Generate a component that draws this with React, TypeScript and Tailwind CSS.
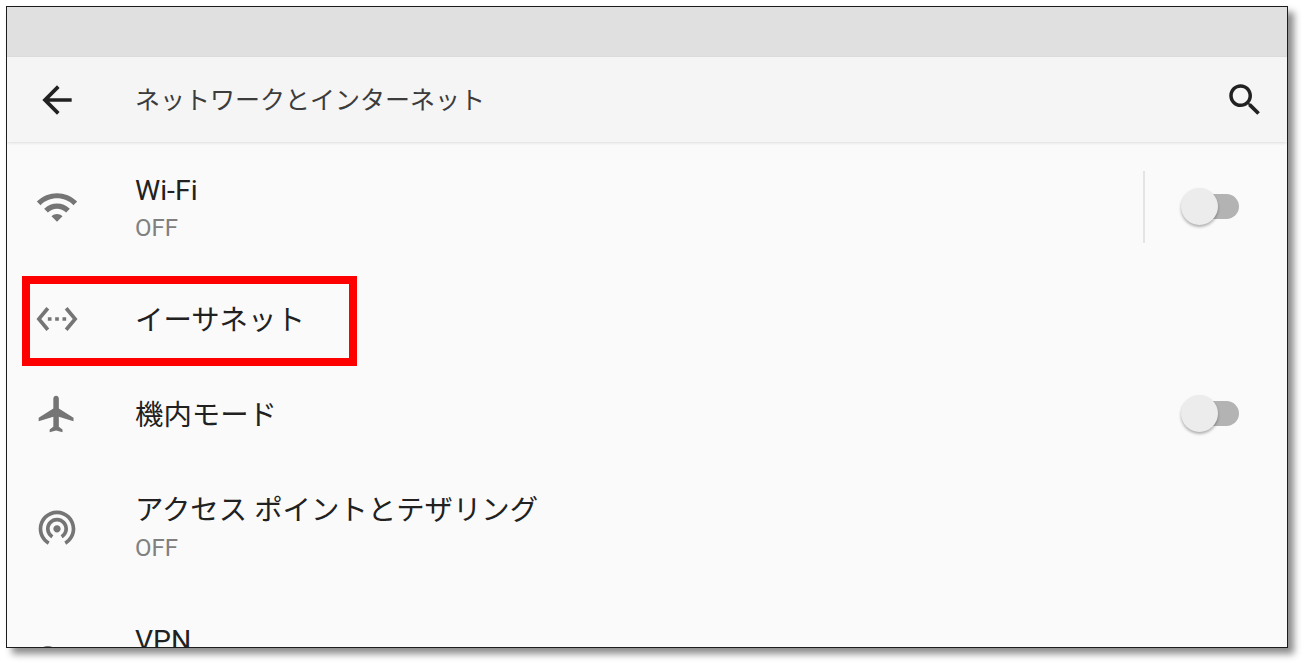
import type { ReactNode } from "react";

// Material icon paths
const ICONS = {
  back: "M20 11H7.83l5.59-5.59L12 4l-8 8 8 8 1.41-1.41L7.83 13H20v-2z",
  search:
    "M15.5 14h-.79l-.28-.27C15.41 12.59 16 11.11 16 9.5 16 5.91 13.09 3 9.5 3S3 5.91 3 9.5 5.91 16 9.5 16c1.61 0 3.09-.59 4.23-1.57l.27.28v.79l5 4.99L20.49 19l-4.99-5zm-6 0C7.01 14 5 11.99 5 9.5S7.01 5 9.5 5 14 7.01 14 9.5 11.99 14 9.5 14z",
  wifi: "M1 9l2 2c4.97-4.97 13.03-4.97 18 0l2-2C16.93 2.93 7.08 2.93 1 9zm8 8l3 3 3-3c-1.65-1.66-4.34-1.66-6 0zm-4-4l2 2c2.76-2.76 7.24-2.76 10 0l2-2C15.14 9.14 8.87 9.14 5 13z",
  ethernet:
    "M7.77 6.76L6.23 5.48.82 12l5.41 6.52 1.54-1.28L3.42 12l4.35-5.24zM7 13h2v-2H7v2zm10-2h-2v2h2v-2zm-6 2h2v-2h-2v2zm6.77-7.52l-1.54 1.28L20.58 12l-4.35 5.24 1.54 1.28L23.18 12l-5.41-6.52z",
  plane:
    "M21 16v-2l-8-5V3.5c0-.83-.67-1.5-1.5-1.5S10 2.67 10 3.5V9l-8 5v2l8-2.5V19l-2 1.5V22l3.5-1 3.5 1v-1.5L13 19v-5.5l8 2.5z",
  tether:
    "M12 11c-1.1 0-2 .9-2 2s.9 2 2 2 2-.9 2-2-.9-2-2-2zm6 2c0-3.31-2.69-6-6-6s-6 2.69-6 6c0 2.22 1.21 4.15 3 5.19l1-1.74c-1.19-.7-2-1.97-2-3.45 0-2.21 1.79-4 4-4s4 1.79 4 4c0 1.48-.81 2.75-2 3.45l1 1.74c1.79-1.04 3-2.97 3-5.19zM12 3C6.48 3 2 7.48 2 13c0 3.7 2.01 6.92 4.99 8.65l1-1.73C5.61 18.53 4 15.96 4 13c0-4.42 3.58-8 8-8s8 3.58 8 8c0 2.96-1.61 5.53-4 6.92l1 1.73c2.99-1.73 5-4.95 5-8.65 0-5.52-4.48-10-10-10z",
  key: "M12.65 10C11.83 7.67 9.61 6 7 6c-3.31 0-6 2.69-6 6s2.69 6 6 6c2.61 0 4.83-1.67 5.65-4H17v4h4v-4h2v-4H12.65zM7 14c-1.1 0-2-.9-2-2s.9-2 2-2 2 .9 2 2-.9 2-2 2z",
};

function Icon({ d, className }: { d: string; className: string }) {
  return (
    <svg viewBox="0 0 24 24" className={`shrink-0 ${className}`} fill="currentColor">
      <path d={d} />
    </svg>
  );
}

function Toggle() {
  return (
    <div className="relative w-[58px] h-[37px] mb-[2px] shrink-0">
      <div className="absolute right-0 top-[6px] w-[50px] h-[25px] rounded-full bg-[#b3b3b3]" />
      <div className="absolute left-0 top-0 w-[37px] h-[37px] rounded-full bg-[#ececec] shadow-[0_2px_3px_rgba(0,0,0,0.3)]" />
    </div>
  );
}

interface RowProps {
  icon: string;
  title: string;
  sub?: string;
  height: string;
  children?: ReactNode;
}

function Row({ icon, title, sub, height, children }: RowProps) {
  return (
    <div className={`flex items-center shrink-0 pl-[28px] pr-[48px] ${height}`}>
      <Icon d={icon} className="w-[44px] h-[44px] text-[#757575]" />
      <div className="flex-1 pl-[56px] pt-[4px]">
        <div className="text-[28.4px] leading-[38px] text-[#212121]">{title}</div>
        {sub && <div className="text-[24px] leading-[36px] text-[#808080]">{sub}</div>}
      </div>
      {children}
    </div>
  );
}

export default function App() {
  return (
    <div
      className="w-[1307px] h-[667px] bg-white pl-[6px] pt-[6px] overflow-hidden"
      style={{ fontFamily: 'Roboto, "Noto Sans CJK JP", sans-serif' }}
    >
      <div className="relative w-[1282px] h-[642px] border-[1.5px] border-[#1c1c1c] bg-[#fafafa] shadow-[6px_6px_7px_rgba(0,0,0,0.45)]">
        <div className="h-full flex flex-col overflow-hidden">
          <div className="h-[50px] shrink-0 bg-[#e0e0e0]" />
          <header className="h-[85px] shrink-0 flex items-center pl-[28px] pr-[21px] bg-[#f5f5f5] shadow-[0_1px_3px_rgba(0,0,0,0.12)] relative">
            <Icon d={ICONS.back} className="w-[44px] h-[44px] text-[#212121]" />
            <div className="flex-1 pl-[56px] pt-[3px] text-[25px] text-[#3c3c3c]">ネットワークとインターネット</div>
            <Icon d={ICONS.search} className="w-[42px] h-[42px] text-[#212121]" />
          </header>
          <Row icon={ICONS.wifi} title="Wi-Fi" sub="OFF" height="h-[130px]">
            <div className="w-[2px] h-[72px] bg-[#e4e4e4] mr-[36px]" />
            <Toggle />
          </Row>
          <Row icon={ICONS.ethernet} title="イーサネット" height="h-[94px]" />
          <Row icon={ICONS.plane} title="機内モード" height="h-[96px]">
            <Toggle />
          </Row>
          <Row icon={ICONS.tether} title="アクセス ポイントとテザリング" sub="OFF" height="h-[130px]" />
          <Row icon={ICONS.key} title="VPN" sub={"\u00a0"} height="h-[130px]" />
        </div>
        {/* 赤枠の注釈 */}
        <div className="absolute left-[15px] top-[269px] w-[335px] h-[90px] border-[8px] border-[#ff0000]" />
      </div>
    </div>
  );
}
